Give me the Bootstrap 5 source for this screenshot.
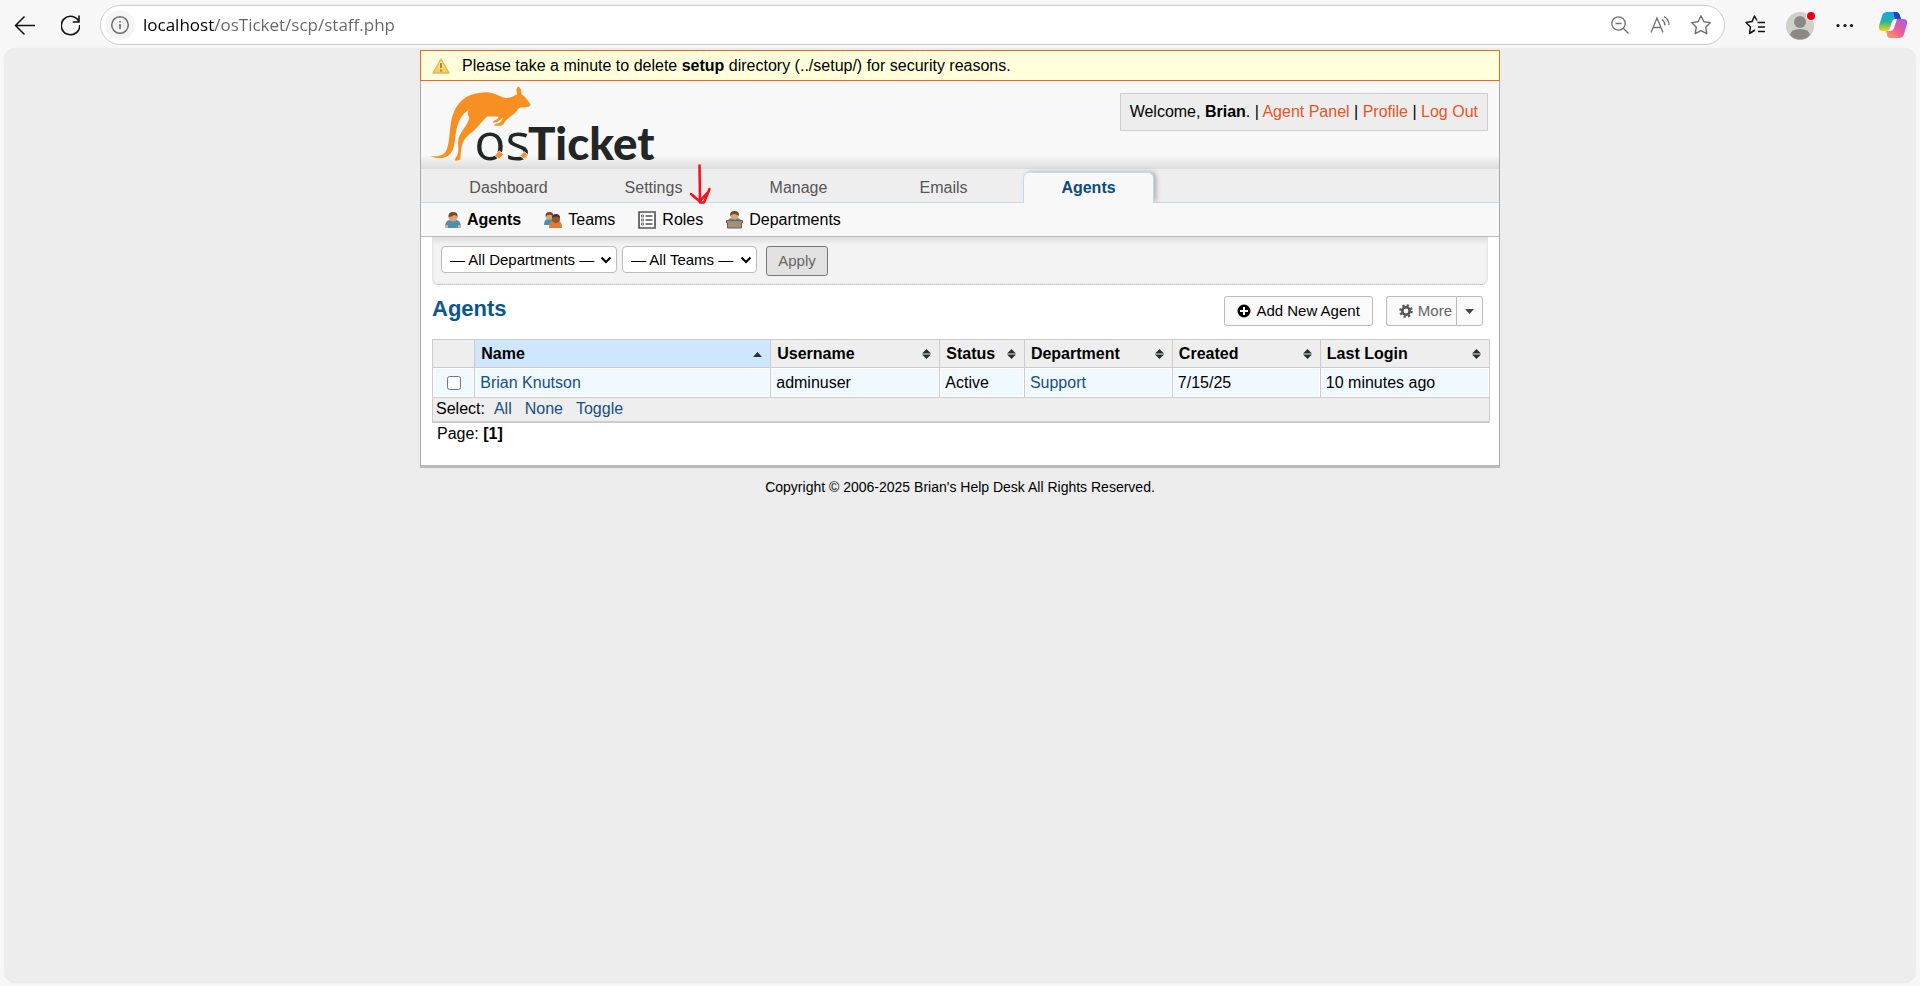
<!DOCTYPE html>
<html lang="en">
<head>
<meta charset="utf-8">
<meta name="viewport" content="width=device-width, initial-scale=1">
<title>osTicket :: Staff Control Panel</title>
<link href="https://cdn.jsdelivr.net/npm/bootstrap@5.3.0/dist/css/bootstrap.min.css" rel="stylesheet">
<style>
body{font-family:"Liberation Sans",Arial,sans-serif;font-size:16px;line-height:20px;color:#000;background:#f7f7f7}
a{text-decoration:none;color:#184e81}
svg{display:block;flex:none}
.chrome-bar{height:49px;padding:0 10px 0 13px}
.chrome-bar .icon-button{border:0;background:none;padding:0;color:#111}
.address{height:40px;margin:0 15px 0 20px;border:1px solid #ccc;border-radius:20px;background:#fff;padding:0 12px 0 4px}
.address .icon-button{color:#707070}
.address-tools{gap:20px}
.site-info{width:30px;height:30px;border-radius:50%;background:#f5f5f5!important}
.address input{font-family:"Open Sans","Noto Sans",sans-serif;font-size:17px;line-height:24px;border:0;outline:0;padding:0;min-width:0;color:#666;-webkit-text-fill-color:transparent;background:linear-gradient(90deg,#000 72px,#666 72px);-webkit-background-clip:text;background-clip:text}
.viewport{margin:0 5px 4px;background:#ededed;border-radius:10px;box-shadow:0 0 2px #ccc;padding-top:1px}
.frame{max-width:1080px;background:#fff;border:1px solid #aaa;border-top:0;border-bottom:3px solid #bbb}
.notice{margin:0 -1px;height:31px;background:#ffffdc;border:1px solid #f26522;padding:0 10px;gap:11px}
.masthead{height:88px;padding:12px 11px 0 8px;background:linear-gradient(#f8f8f8 74px,#dedede);border-bottom:1px solid #ddd}
.masthead .logo{margin-top:-10px}
.logo svg{overflow:visible}
.user-info{height:38px;background:#ededed;border:1px solid #ccc;padding:8px 9px;white-space:nowrap}
.user-info a{color:#e65524}
.tabs{height:34px;padding:3px 22px 0;gap:14px;background:#eee;border-bottom:1px solid #c5d9ec}
.tabs a{width:131px;height:31px;line-height:30px;text-align:center;color:#555;border:1px solid transparent;border-bottom:0;border-radius:6px 6px 0 0}
.tabs a.active{background:#f8f8f8;color:#0a4a80;font-weight:bold;border-color:#c5d9ec;box-shadow:3px -1px 5px -1px #aaa;clip-path:inset(-6px -8px 0 -2px);margin-bottom:-1px}
.tabs .arrow{position:absolute;left:268px;top:-5px}
.subnav{height:34px;padding:0 24px;gap:23px;background:#f8f8f8;border-bottom:1px solid #bbb}
.subnav a{gap:6px;color:#000}
.filters{height:48px;margin:0 11px;padding:9px;gap:5px;background:linear-gradient(#ddd,#f3f3f3 8px);border-bottom:1px dotted #bbb;border-radius:0 0 6px 6px;box-shadow:inset 1px 0 2px #e2e2e2,inset -1px 0 2px #e2e2e2}
.pick{position:relative}
.pick select{appearance:none;height:27px;border:1px solid #bbb;border-radius:4px;background:#fff;font-size:15px;line-height:18px;padding:0 18px 0 8px;color:#000}
.pick svg{position:absolute;right:5px;top:10px;pointer-events:none}
.dept select{width:176px}.team select{width:135px}
.apply{height:30px;width:62px;margin-left:4px;border:1px solid #777;border-radius:3px;background:#e1e1e1;color:#666;font-size:15px;padding:0}
.heading{padding:11px 16px 13px 11px}
.action-bar{gap:13px}
h1{font-size:22px;line-height:26px;font-weight:bold;color:#0a568e;margin:0}
.action{height:30px;border:1px solid #bbb;border-radius:3px;background:#fafafa;color:#000;font-size:15px;line-height:18px;padding:0 12px;gap:5px}
.more-group .action{color:#666}
.list-wrap{margin:0 9px 0 11px}
.agents-list{table-layout:fixed;margin:0;color:#000;border:1px solid #ccc;border-bottom:2px solid #ccc}
.agents-list>:not(caption)>*>*{box-shadow:none;color:#000;border:1px solid #ccc;padding:0 8px 0 6px;vertical-align:middle}
.agents-list thead th{height:28px;background:#eee}
.agents-list thead th.sorted{background:#cfe6ff}
.agents-list tbody td{height:30px;padding:0 5px;background:#f0f9ff;box-shadow:inset 0 0 0 1px #fff}
.agents-list tfoot td{height:24px;padding:0 3px;background:#eee}
.agents-list tfoot a{margin-left:1px}
.agents-list input{width:14px;height:14px;margin:0;display:block}
.w4{width:4%}.w8{width:8%}.w14{width:14%}.w16{width:16%}.w28{width:28%}
.pages{padding:1px 5px 21px}
.copyright{font-size:14px;line-height:20px;padding-top:9px;text-align:center}
</style>
</head>
<body class="d-flex flex-column min-vh-100">
<header class="chrome-bar d-flex align-items-center">
  <button class="icon-button" aria-label="Back"><svg width="24" height="24" fill="none" stroke="currentColor" stroke-width="1.500"><path d="M22 12.500H2.500M11.500 3.500l-9 9 9 9"/></svg></button>
  <button class="icon-button ms-4" aria-label="Refresh"><svg width="19" height="24" viewBox="2.500 0 19 24" fill="none" stroke="currentColor" stroke-width="1.600"><path d="M20.700 9.500A9.200 9.200 0 1 0 21.200 12M20.500 2.500v6.500h-6.300"/></svg></button>
  <div class="address flex-grow-1 d-flex align-items-center">
    <button class="icon-button site-info d-flex align-items-center justify-content-center" aria-label="Site information"><svg width="20" height="20" fill="none" stroke="currentColor" stroke-width="1.500"><circle cx="10" cy="10" r="8.300"/><path d="M10 9v5M10 6v1.500" stroke-width="1.700"/></svg></button>
    <input class="flex-grow-1 ms-2" type="text" aria-label="Address" value="localhost/osTicket/scp/staff.php">
    <div class="address-tools d-flex align-items-center">
      <button class="icon-button" aria-label="Zoom out"><svg width="20" height="20" fill="none" stroke="currentColor" stroke-width="1.300"><circle cx="8.500" cy="8.500" r="6.700"/><path d="M13.500 13.500l5 5M5.500 8.500h6"/></svg></button>
      <button class="icon-button" aria-label="Read aloud"><svg width="20" height="20" fill="none" stroke="currentColor" stroke-width="1.300"><path d="M1 17.500L7 3l6 14.500M3 12.500h8M12 4.500q3 2 3 6M14 1.500q5 3 5 8.500"/></svg></button>
      <button class="icon-button" aria-label="Add to favorites"><svg width="22" height="22" fill="none" stroke="currentColor" stroke-width="1.400" stroke-linejoin="round"><path d="M11 1.800l2.900 5.900 6.500.9-4.700 4.600 1.100 6.500-5.800-3.100-5.800 3.100 1.100-6.500L1.600 8.600l6.500-.9z"/></svg></button>
    </div>
  </div>
  <button class="icon-button ms-1" aria-label="Favorites"><svg width="22" height="22" fill="none" stroke="currentColor" stroke-width="1.500" stroke-linejoin="round"><path d="M13.500 8.500h7.500M14 13h7M14 17.500h7M11 16l-5.500 3.500 1-6.500L2 8.500l6-.9 2.500-5.600 2.500 4.500"/></svg></button>
  <button class="icon-button ms-3" aria-label="Profile"><svg width="36" height="34"><circle cx="18" cy="18" r="14" fill="#d1cfca"/><circle cx="18" cy="14" r="6" fill="#8c8886"/><path d="M8 27q1-6 10-6t10 6q-4 4.500-10 4.500T8 27" fill="#8c8886"/><circle cx="29" cy="8" r="5" fill="#f7f7f7"/><circle cx="29" cy="8" r="4" fill="#e8000c"/></svg></button>
  <button class="icon-button ms-3" aria-label="Settings and more"><svg width="24" height="24"><g fill="currentColor"><circle cx="4" cy="12.500" r="1.600"/><circle cx="11" cy="12.500" r="1.600"/><circle cx="17.500" cy="12.500" r="1.600"/></g></svg></button>
  <button class="icon-button ms-3" aria-label="Copilot"><svg width="36" height="28" viewBox="-5 0 36 28"><defs><linearGradient id="cpA" x1="0" y1="0" x2="0" y2="1"><stop offset="0" stop-color="#16a5f2"/><stop offset=".5" stop-color="#22b69b"/><stop offset="1" stop-color="#ffd400"/></linearGradient><linearGradient id="cpB" x1="1" y1="0" x2="0" y2="1"><stop offset="0" stop-color="#9a5cf0"/><stop offset=".5" stop-color="#f0599c"/><stop offset="1" stop-color="#ffa546"/></linearGradient></defs>
  <path d="M8 1h9q3 0 4 4l1 3h-5q-3 0-4 3l-2 6q-1 3-4 3H4q-5 0-4-5l3-10q1-4 5-4z" fill="url(#cpA)"/><path d="M20 27h-9q-3 0-3-4l-1-3q3 0 4-3l2-6q1-3 4-3h7q5 0 4 5l-3 10q-1 4-5 4z" fill="url(#cpB)"/><path d="M13 1h4q3 0 4 4l1 3h-4q-3 0-3-4 0-3-2-3z" fill="#1a45c9"/><path d="M17 8q-3 0-4 3l-2 6q-1 3-4 3h4q3 0 4-3l3-9z" fill="#fff"/></svg></button>
</header>

<div class="viewport flex-grow-1">
<main class="frame container-fluid px-0 mx-auto">
  <div class="notice d-flex align-items-center" role="alert">
    <svg width="20" height="18" viewBox="0 0 20 18"><defs><linearGradient id="wn" x2="0" y2="1"><stop stop-color="#fff0b4"/><stop offset="1" stop-color="#f2c754"/></linearGradient></defs><path d="M10 2l8 14H2z" fill="url(#wn)" stroke="#e0b95c" stroke-width="1.500" stroke-linejoin="round"/><path d="M10 6v5M10 12.500v2" stroke="#b08a2a" stroke-width="2"/></svg>
    <span>Please take a minute to delete <strong>setup</strong> directory (../setup/) for security reasons.</span>
  </div>
  <div class="masthead d-flex justify-content-between align-items-start">
    <a class="logo" href="#" aria-label="osTicket home">
      <svg width="230" height="82" viewBox="14 9 690 246">
        <path fill="#f79022" d="M18 228C35 231 55 228 64 215C80 190 72 130 90 93C106 58 135 38 185 37C215 38 228 52 243 54C262 55 270 46 279 42C275 32 275 22 282 20C288 21 292 30 291 43C305 51 308 60 318 72C320 80 308 83 292 82C281 83 280 92 272 99C260 108 251 115 244 122C239 128 238 136 228 137L210 137C208 133 213 131 224 130C230 126 233 119 236 113C229 116 224 123 218 126L206 128C204 124 210 122 216 119L223 111C214 108 204 111 190 109C176 119 165 138 143 157C126 169 118 180 113 196C109 214 109 228 108 238C104 243 94 243 91 241C92 234 99 229 101 218C104 203 99 188 103 173C109 155 132 131 135 113C128 104 130 96 133 90C111 103 102 125 96 150C91 178 92 210 74 226C56 239 31 235 18 228Z"/>
        <g fill="#232627"><text x="150" y="239" font-family="'Open Sans',sans-serif" font-weight="400" font-size="156">os</text><text x="311" y="239" font-family="Lato,sans-serif" font-size="137" font-weight="900">Ticket</text></g>
        <path d="M211 226l14-13 13 10-14 14zM287 227l12-12 12 9-12 13z" fill="#f79022" stroke="#eee" stroke-width="3"/>
      </svg>
    </a>
    <div class="user-info">Welcome, <strong>Brian</strong>. | <a href="#">Agent Panel</a> | <a href="#">Profile</a> | <a href="#">Log Out</a></div>
  </div>
  <nav class="tabs d-flex position-relative" aria-label="Main">
    <a href="#">Dashboard</a><a href="#">Settings</a><a href="#">Manage</a><a href="#">Emails</a><a href="#" class="active" aria-current="page">Agents</a>
    <svg class="arrow" width="24" height="42" fill="none" stroke="#fb0d1b" stroke-width="2.500" stroke-linecap="round" stroke-linejoin="round"><path d="M10.500 1.500l.5 37M2 30l10 8.500h3L20.500 25M11 37l8-9"/></svg>
  </nav>
  <nav class="subnav d-flex align-items-center" aria-label="Agents">
    <a href="#" class="d-flex align-items-center fw-bold"><svg width="16" height="16"><path d="M0 16q0-8 5-8h6q5 0 5 8z" fill="#4d8eb4"/><path d="M0 13h3v3H0zM13 13h3v3h-3z" fill="#e3aa7d"/><circle cx="8" cy="5" r="4.500" fill="#dda273"/><path d="M3.500 5Q3 0 8 0t4.500 5Q10 2 8 3.500T3.500 5" fill="#754b25"/></svg>Agents</a>
    <a href="#" class="d-flex align-items-center"><svg width="18" height="16"><path d="M0 13q0-6 4-6h5v6z" fill="#4d8eb4"/><circle cx="5.500" cy="4" r="3.700" fill="#dda273"/><path d="M1.500 5Q1 0 5.500 0T9 4Q4 1 1.500 5" fill="#754b25"/><path d="M5 16q0-7 4-7h5q4 0 4 7z" fill="#e77936"/><circle cx="12" cy="7" r="4" fill="#8d5834"/><path d="M8 6q0-4 4-4t4 4q-4-3-8 0" fill="#473126"/></svg>Teams</a>
    <a href="#" class="d-flex align-items-center"><svg width="18" height="18" fill="none" stroke="#555"><path d="M1 1h16v16H1z" stroke-width="1.700" fill="#fff"/><path d="M7.500 5h7M7.500 9h7M7.500 13h7" stroke-width="1.300"/><path d="M3.500 4h2v2h-2zM3.500 8h2v2h-2zM3.500 12h2v2h-2z" stroke-width=".8"/></svg>Roles</a>
    <a href="#" class="d-flex align-items-center"><svg width="17" height="18"><path d="M2 11q0-4 4-4h5q4 0 4 4z" fill="#4d8eb4"/><circle cx="8.500" cy="4.500" r="4" fill="#dda273"/><path d="M4 5Q3.500 0 8.500 0T13 5Q8 1 4 5" fill="#754b25"/><path d="M.5 9.500h16V12h-1v5h-14v-5h-1z" fill="#a58e78" stroke="#705e4e"/></svg>Departments</a>
  </nav>
  <form class="filters d-flex align-items-start">
    <div class="pick dept"><select aria-label="Department"><option>— All Departments —</option></select><svg width="12" height="8" fill="none" stroke="#000" stroke-width="2"><path d="M1.500 1.500L6 6l4.500-4.500"/></svg></div>
    <div class="pick team"><select aria-label="Team"><option>— All Teams —</option></select><svg width="12" height="8" fill="none" stroke="#000" stroke-width="2"><path d="M1.500 1.500L6 6l4.500-4.500"/></svg></div>
    <button type="button" class="apply">Apply</button>
  </form>
  <div class="heading d-flex justify-content-between align-items-start">
    <h1>Agents</h1>
    <div class="action-bar d-flex">
      <button class="action d-flex align-items-center"><svg width="14" height="14"><circle cx="7" cy="7" r="6.500"/><path d="M7 3v8M3 7h8" stroke="#fff" stroke-width="2"/></svg>Add New Agent</button>
      <div class="more-group d-flex">
        <button class="action d-flex align-items-center rounded-end-0 border-end-0 pe-1"><svg width="14" height="14" fill="none" stroke="#555"><circle cx="7" cy="7" r="3.700" stroke-width="2.600"/><circle cx="7" cy="7" r="5.600" stroke-width="2.400" stroke-dasharray="2.200"/></svg>More</button>
        <button class="action px-2 rounded-start-0" aria-label="More actions"><svg width="9" height="6" fill="#444"><path d="M0 1h9L4.500 6z"/></svg></button>
      </div>
    </div>
  </div>
  <div class="list-wrap">
    <table class="table agents-list">
      <colgroup><col class="w4"><col class="w28"><col class="w16"><col class="w8"><col class="w14"><col class="w14"><col class="w16"></colgroup>
      <thead><tr>
        <th></th>
        <th class="sorted"><div class="d-flex justify-content-between align-items-center">Name<svg width="9" height="10" fill="#283033"><path d="M0 8h9L4.500 3z"/></svg></div></th>
        <th><div class="d-flex justify-content-between align-items-center">Username<svg width="9" height="10" fill="#283033"><path d="M0 4.500h9L4.500 0zM0 5.500h9L4.500 10z"/></svg></div></th>
        <th><div class="d-flex justify-content-between align-items-center">Status<svg width="9" height="10" fill="#283033"><path d="M0 4.500h9L4.500 0zM0 5.500h9L4.500 10z"/></svg></div></th>
        <th><div class="d-flex justify-content-between align-items-center">Department<svg width="9" height="10" fill="#283033"><path d="M0 4.500h9L4.500 0zM0 5.500h9L4.500 10z"/></svg></div></th>
        <th><div class="d-flex justify-content-between align-items-center">Created<svg width="9" height="10" fill="#283033"><path d="M0 4.500h9L4.500 0zM0 5.500h9L4.500 10z"/></svg></div></th>
        <th><div class="d-flex justify-content-between align-items-center">Last Login<svg width="9" height="10" fill="#283033"><path d="M0 4.500h9L4.500 0zM0 5.500h9L4.500 10z"/></svg></div></th>
      </tr></thead>
      <tbody><tr>
        <td><input class="mx-auto" type="checkbox" aria-label="Select Brian Knutson"></td>
        <td><a href="#">Brian Knutson</a></td><td>adminuser</td><td>Active</td><td><a href="#">Support</a></td><td>7/15/25</td><td>10 minutes ago</td>
      </tr></tbody>
      <tfoot><tr><td colspan="7"><div class="d-flex"><span class="me-2">Select:</span><a href="#" class="pe-2 me-1">All</a><a href="#" class="pe-2 me-1">None</a><a href="#">Toggle</a></div></td></tr></tfoot>
    </table>
    <div class="pages">Page: <strong>[1]</strong></div>
  </div>
</main>
<footer class="copyright">Copyright © 2006-2025 Brian's Help Desk All Rights Reserved.</footer>
</div>
<script src="https://cdn.jsdelivr.net/npm/bootstrap@5.3.0/dist/js/bootstrap.bundle.min.js"></script>
</body>
</html>
